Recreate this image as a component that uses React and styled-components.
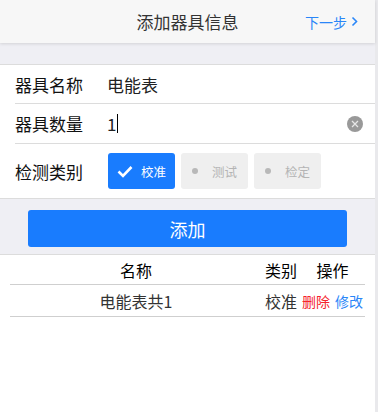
import styled, { createGlobalStyle } from "styled-components";

const Global = createGlobalStyle`
  html, body {
    margin: 0;
    padding: 0;
    background: #e9e9ec;
    font-family: "Noto Sans CJK SC", "Noto Sans", sans-serif;
  }
`;

const Page = styled.div`
    width: 375px;
    min-height: 412px;
    background: #fff;
`;

const Header = styled.div`
    height: 43px;
    background: #f7f7f7;
    box-shadow: 0 1px 3px rgba(0, 0, 0, 0.12);
    position: relative;
    display: flex;
    align-items: center;
    justify-content: center;
    font-size: 17px;
    color: #333;
`;

const Next = styled.div`
    position: absolute;
    right: 17px;
    top: 0;
    height: 43px;
    display: flex;
    align-items: center;
    gap: 4px;
    font-size: 14px;
    color: #2a86f8;
`;

const Gap = styled.div`
    height: ${p => p.h}px;
    background: #efeff4;
    border-bottom: 1px solid #dcdcdc;
    box-sizing: border-box;
`;

const Form = styled.div`
    background: #fff;
    border-bottom: 1px solid #dcdcdc;
`;

const Row = styled.div`
    margin-left: 15px;
    height: ${p => p.h}px;
    display: flex;
    align-items: center;
    border-bottom: ${p => (p.last ? "none" : "1px solid #dcdcdc")};
    box-sizing: border-box;
    padding-right: 12px;
`;

const Label = styled.div`
    width: 92px;
    font-size: 17px;
    color: #111;
`;

const Value = styled.div`
    flex: 1;
    font-size: 17px;
    color: #222;
    display: flex;
    align-items: center;
`;

const Caret = styled.span`
    display: inline-block;
    width: 1px;
    height: 19px;
    background: #000;
    margin-left: 1px;
`;

const Clear = styled.div`
    width: 16px;
    height: 16px;
    border-radius: 50%;
    background: #999;
    display: flex;
    align-items: center;
    justify-content: center;
`;

const Choices = styled.div`
    display: flex;
    gap: 6px;
    margin-left: 1px;
`;

const Choice = styled.div`
    width: 67px;
    height: 36px;
    border-radius: 3px;
    display: flex;
    align-items: center;
    justify-content: center;
    gap: 8px;
    font-size: 12.5px;
    background: ${p => (p.on ? "#197cfe" : "#efefef")};
    color: ${p => (p.on ? "#fff" : "#b4b4b4")};
`;

const Dot = styled.span`
    width: 6px;
    height: 6px;
    border-radius: 50%;
    background: #b8b8b8;
    margin-right: 6px;
`;

const ButtonArea = styled.div`
    background: #efeff4;
    padding: 11px 28px 7px;
    border-bottom: 1px solid #dcdcdc;
`;

const AddButton = styled.div`
    height: 37px;
    border-radius: 3px;
    background: #197cfe;
    color: #fff;
    font-size: 18px;
    display: flex;
    align-items: center;
    justify-content: center;
`;

const Table = styled.div`
    margin: 0 10px;
    width: 355px;
`;

const TRow = styled.div`
    display: grid;
    grid-template-columns: 252px 38px 65px;
    height: ${p => p.h}px;
    box-sizing: border-box;
    align-items: center;
    border-bottom: 1px solid #cfcfcf;
    font-size: 16px;
    color: ${p => (p.head ? "#000" : "#333")};
`;

const Cell = styled.div`
    text-align: center;
    display: flex;
    justify-content: center;
    align-items: center;
    gap: 5px;
    white-space: nowrap;
`;

const Op = styled.span`
    font-size: 14px;
    color: ${p => p.c};
`;

export default function App() {
  return (
    <>
      <Global />
      <Page>
        <Header>
          添加器具信息
          <Next>
            下一步
            <svg width="7" height="11" viewBox="0 0 7 11">
              <path d="M1.5 1.5 L5.5 5.5 L1.5 9.5" fill="none" stroke="#2a86f8" strokeWidth="1.6" />
            </svg>
          </Next>
        </Header>
        <Gap h={22} />
        <Form>
          <Row h={39}>
            <Label>器具名称</Label>
            <Value>电能表</Value>
          </Row>
          <Row h={40}>
            <Label>器具数量</Label>
            <Value>1<Caret /></Value>
            <Clear>
              <svg width="8" height="8" viewBox="0 0 8 8">
                <path d="M1 1 L7 7 M7 1 L1 7" stroke="#e6e6e6" strokeWidth="1.3" />
              </svg>
            </Clear>
          </Row>
          <Row h={54} last>
            <Label>检测类别</Label>
            <Choices>
              <Choice on>
                <svg width="16" height="13" viewBox="0 0 16 13">
                  <path d="M1.5 6.5 L6 11 L14.5 2" fill="none" stroke="#fff" strokeWidth="2.6" />
                </svg>
                校准
              </Choice>
              <Choice><Dot />测试</Choice>
              <Choice><Dot />检定</Choice>
            </Choices>
          </Row>
        </Form>
        <ButtonArea>
          <AddButton>添加</AddButton>
        </ButtonArea>
        <Table>
          <TRow head h={30}>
            <Cell>名称</Cell>
            <Cell>类别</Cell>
            <Cell>操作</Cell>
          </TRow>
          <TRow h={32}>
            <Cell>电能表共1</Cell>
            <Cell>校准</Cell>
            <Cell>
              <Op c="#f5222d">删除</Op>
              <Op c="#2a86f8">修改</Op>
            </Cell>
          </TRow>
        </Table>
      </Page>
    </>
  );
}
